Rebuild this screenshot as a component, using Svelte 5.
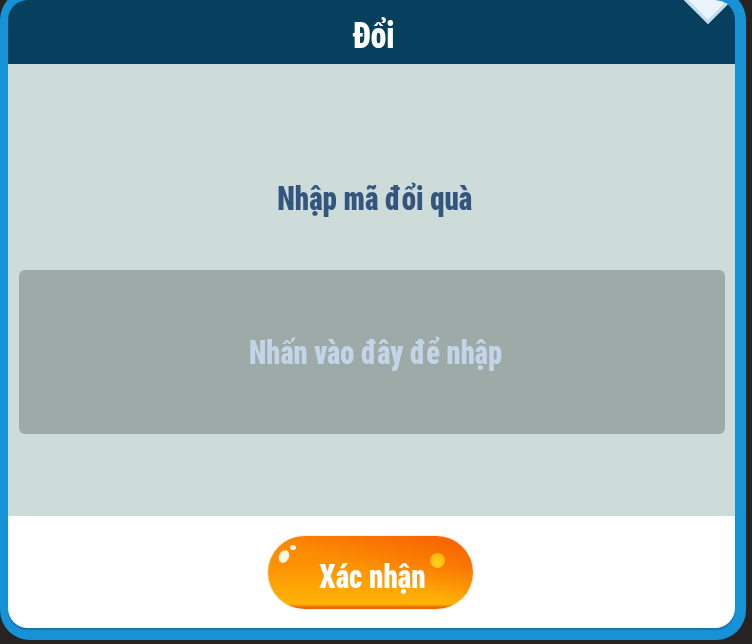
<script>
  const placeholder = 'Nhấn vào đây để nhập';
</script>

<div class="page">
  <div class="frame">
    <header class="head">
      <h1><span class="squeeze">Đổi</span></h1>
      <span class="close" aria-hidden="true"></span>
    </header>
    <main class="content">
      <h2><span class="squeeze">Nhập mã đổi quà</span></h2>
      <div class="field">
        <span class="squeeze hint">{placeholder}</span>
      </div>
    </main>
    <footer class="foot">
      <button class="confirm" type="button">
        <span class="squeeze">Xác nhận</span>
        <span class="gloss g1"></span>
        <span class="gloss g2"></span>
        <span class="spark"></span>
      </button>
    </footer>
  </div>
</div>

<style>
  :global(body) {
    margin: 0;
    background: #262322;
  }
  .page {
    width: 752px;
    height: 644px;
    overflow: hidden;
    font-family: "Roboto Condensed", "Liberation Sans Narrow", "Liberation Sans", sans-serif;
    font-weight: 900;
  }
  .squeeze {
    display: inline-block;
    transform: scaleX(0.85);
    white-space: nowrap;
  }
  .hint {
    transform: scaleX(0.835);
  }
  .frame {
    box-sizing: border-box;
    width: 746px;
    height: 650px;
    margin-top: -10px;
    padding: 10px 11px 12px 8px;
    background: #1692d6;
    border-radius: 30px;
    display: flex;
    flex-direction: column;
  }
  .head {
    position: relative;
    height: 64px;
    flex: none;
    box-sizing: border-box;
    padding: 6px 0 0 5px;
    display: flex;
    align-items: center;
    justify-content: center;
    background: #07405f;
    border-radius: 20px 20px 0 0;
    overflow: hidden;
  }
  h1 {
    margin: 0;
    color: #fff;
    font-size: 37px;
    font-weight: 900;
    line-height: 1;
  }
  .close {
    position: absolute;
    top: -17px;
    right: 10px;
    width: 34px;
    height: 34px;
    background: #e8f5fd;
    border: 3px solid #c2dcea;
    box-sizing: border-box;
    transform: rotate(45deg);
  }
  .content {
    flex: 1;
    display: flex;
    flex-direction: column;
    align-items: stretch;
    padding: 0 10px 0 11px;
    background: #cddbd9;
  }
  h2 {
    margin: 114px 0 0;
    padding-left: 5px;
    height: 40px;
    text-align: center;
    color: #34557d;
    font-size: 34px;
    font-weight: 900;
    line-height: 40px;
  }
  .field {
    box-sizing: border-box;
    height: 164px;
    margin-top: 52px;
    padding-left: 7px;
    display: flex;
    align-items: center;
    justify-content: center;
    background: #9eaaa8;
    border-radius: 6px;
    color: #c3d5e6;
    font-size: 34px;
  }
  .foot {
    height: 112px;
    flex: none;
    display: flex;
    align-items: center;
    justify-content: center;
    background: #fff;
    border-radius: 0 0 20px 20px;
    box-shadow: 0 2px 1px #1476ab;
  }
  .confirm {
    position: relative;
    width: 205px;
    height: 73px;
    margin: 1px 2px 0 0;
    padding: 0 0 0 4px;
    border: 0;
    border-radius: 37px;
    background:
      linear-gradient(200deg, rgba(245, 85, 0, 0.8) 0%, rgba(247, 100, 0, 0) 50%),
      linear-gradient(#fb8404 0%, #fd9204 40%, #ffa505 70%, #ffb306 93%, #e9690a 98%, #e8670a 100%);
    box-shadow: 0 0 2px rgba(200, 90, 0, 0.35);
    color: #fff;
    font-family: inherit;
    font-size: 34px;
    font-weight: 900;
  }
  .confirm .squeeze {
    position: relative;
    top: 3px;
  }
  .gloss,
  .spark {
    position: absolute;
    border-radius: 50%;
  }
  .g1 { left: 11px; top: 14px; width: 10px; height: 13px; background: #fff3e0; transform: rotate(25deg); }
  .g2 { left: 22px; top: 9px; width: 6px; height: 5px; background: #fff3e0; }
  .spark {
    left: 162px;
    top: 17px;
    width: 15px;
    height: 15px;
    background: radial-gradient(circle at 50% 65%, #ffd21f, #ffb004 85%);
    filter: blur(0.5px);
  }
</style>
